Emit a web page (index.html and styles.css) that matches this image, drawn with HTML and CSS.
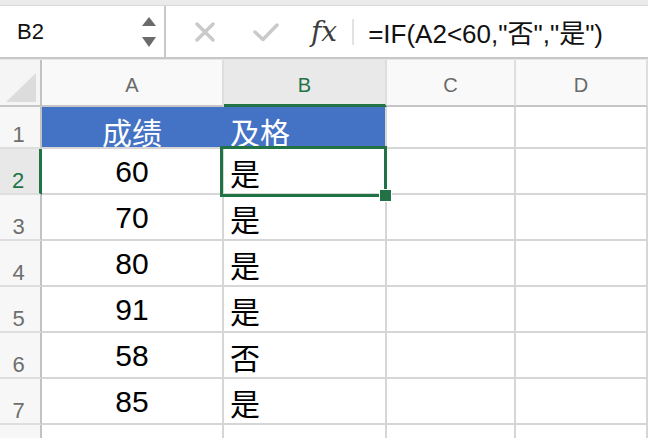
FILE: index.html
```html
<!DOCTYPE html>
<html lang="zh">
<head>
    <meta charset="UTF-8">
    <title>成绩表</title>
    <link rel="stylesheet" href="styles.css">
</head>
<body>

  <div class="top-strip"></div>

  <div class="formula-bar">
    <div class="name-box">
      <span>B2</span>
      <svg class="spinner" width="14" height="32" viewBox="0 0 14 32">
        <polygon points="0,10 7,1 14,10" fill="#6b6b6b"/>
        <polygon points="0,21 14,21 7,31" fill="#6b6b6b"/>
      </svg>
    </div>
    <div class="actions">
      <svg width="24" height="20" viewBox="0 0 24 20">
        <path d="M4 2 L20 18 M20 2 L4 18" stroke="#cacaca" stroke-width="3.5" stroke-linecap="round" fill="none"/>
      </svg>
      <svg width="28" height="20" viewBox="0 0 28 20">
        <path d="M3 10 L11 17.5 L25 3" stroke="#cacaca" stroke-width="3.5" stroke-linecap="round" stroke-linejoin="round" fill="none"/>
      </svg>
    </div>
    <span class="fx">fx</span>
    <span class="divider"></span>
    <span class="formula">=IF(A2&lt;60,"否","是")</span>
  </div>

  <div class="sheet">
    <div class="cell corner">
      <svg width="40" height="45" viewBox="0 0 40 45">
        <polygon points="6,42 36,13 36,42" fill="#dcdcdc"/>
      </svg>
    </div>
    <div class="cell col-head">A</div>
    <div class="cell col-head active">B</div>
    <div class="cell col-head">C</div>
    <div class="cell col-head">D</div>

    <div class="cell row-head">1</div>
    <div class="cell title num first">成绩</div>
    <div class="cell title txt">及格</div>
    <div class="cell"></div>
    <div class="cell"></div>

    <div class="cell row-head active">2</div>
    <div class="cell num">60</div>
    <div class="cell txt selected">是</div>
    <div class="cell"></div>
    <div class="cell"></div>

    <div class="cell row-head">3</div>
    <div class="cell num">70</div>
    <div class="cell txt">是</div>
    <div class="cell"></div>
    <div class="cell"></div>

    <div class="cell row-head">4</div>
    <div class="cell num">80</div>
    <div class="cell txt">是</div>
    <div class="cell"></div>
    <div class="cell"></div>

    <div class="cell row-head">5</div>
    <div class="cell num">91</div>
    <div class="cell txt">是</div>
    <div class="cell"></div>
    <div class="cell"></div>

    <div class="cell row-head">6</div>
    <div class="cell num">58</div>
    <div class="cell txt">否</div>
    <div class="cell"></div>
    <div class="cell"></div>

    <div class="cell row-head">7</div>
    <div class="cell num">85</div>
    <div class="cell txt">是</div>
    <div class="cell"></div>
    <div class="cell"></div>

    <div class="cell row-head last">8</div>
    <div class="cell"></div>
    <div class="cell"></div>
    <div class="cell"></div>
    <div class="cell"></div>
  </div>

</body>
</html>
```

FILE: styles.css
```css
* {
    margin: 0;
    padding: 0;
    box-sizing: border-box;
}
body {
    width: 648px;
    height: 438px;
    overflow: hidden;
    background: #fff;
    font-family: "Liberation Sans", "Noto Sans CJK SC", sans-serif;
}
.top-strip {
    height: 6px;
    background: #ebebeb;
    border-bottom: 1px solid #d9d9d9;
}
.formula-bar {
    display: flex;
    align-items: center;
    height: 53px;
    border-bottom: 2px solid #c8c8c8;
}
.name-box {
    display: flex;
    align-items: center;
    width: 166px;
    height: 100%;
    padding-left: 17px;
    padding-right: 8px;
    border-right: 2px solid #c8c8c8;
    font-size: 22px;
    color: #111;
}
.name-box .spinner {
    margin-left: auto;
}
.actions {
    display: flex;
    align-items: center;
    gap: 35px;
    margin-left: 27px;
}
.fx {
    margin-left: 31px;
    font-family: "DejaVu Serif", serif;
    font-style: italic;
    font-size: 28px;
    color: #3c3c3c;
}
.divider {
    width: 2px;
    height: 26px;
    background: #e2e2e2;
    margin-left: 15px;
}
.formula {
    margin-left: 14px;
    font-size: 26px;
    color: #111;
    white-space: nowrap;
}

/* grid */
.sheet {
    display: grid;
    grid-template-columns: 42px 182px 163px 129px 1fr;
    grid-template-rows: 47px 42px repeat(7, 46px);
    border-top: 1px solid #e6e6e6;
}
.cell {
    display: flex;
    align-items: center;
    padding-top: 2px;
    border-right: 2px solid #d6d6d6;
    border-bottom: 2px solid #d6d6d6;
    font-size: 30px;
    color: #000;
}
.corner {
    padding-top: 0;
    background: #f5f5f5;
    border-right-color: #c2c2c2;
    border-bottom-color: #c6c6c6;
}
.col-head {
    justify-content: center;
    padding-top: 6px;
    background: #f9f9f9;
    font-size: 20px;
    color: #6a6a6a;
    border-right-color: #dedede;
    border-bottom-color: #c6c6c6;
}
.col-head.active {
    background: #e9e9e9;
    color: #217346;
    border-bottom: 3px solid #217346;
}
.row-head {
    justify-content: center;
    align-items: flex-end;
    padding: 0 3px 1px 0;
    background: #f7f7f7;
    font-size: 22px;
    line-height: 1;
    color: #6e6e6e;
    border-right-color: #c2c2c2;
    border-bottom-color: #dedede;
}
.row-head.active {
    background: #e8e8e8;
    color: #217346;
    border-right: 3px solid #217346;
}
.row-head.last {
    align-items: flex-start;
    padding-top: 10px;
}
.num {
    justify-content: center;
}
.txt {
    padding-left: 6px;
}
.title {
    padding-top: 8px;
    background: #4472c4;
    color: #fff;
}
.title.first {
    border-right-color: #4472c4;
}
.selected {
    position: relative;
}
.selected::after {
    content: "";
    position: absolute;
    top: -3px;
    left: -4px;
    right: -2px;
    bottom: -4px;
    border: 3px solid #217346;
}
.selected::before {
    content: "";
    position: absolute;
    left: 155px;
    top: 40px;
    width: 11px;
    height: 11px;
    background: #217346;
    border: 1px solid #fff;
    z-index: 1;
}
```
